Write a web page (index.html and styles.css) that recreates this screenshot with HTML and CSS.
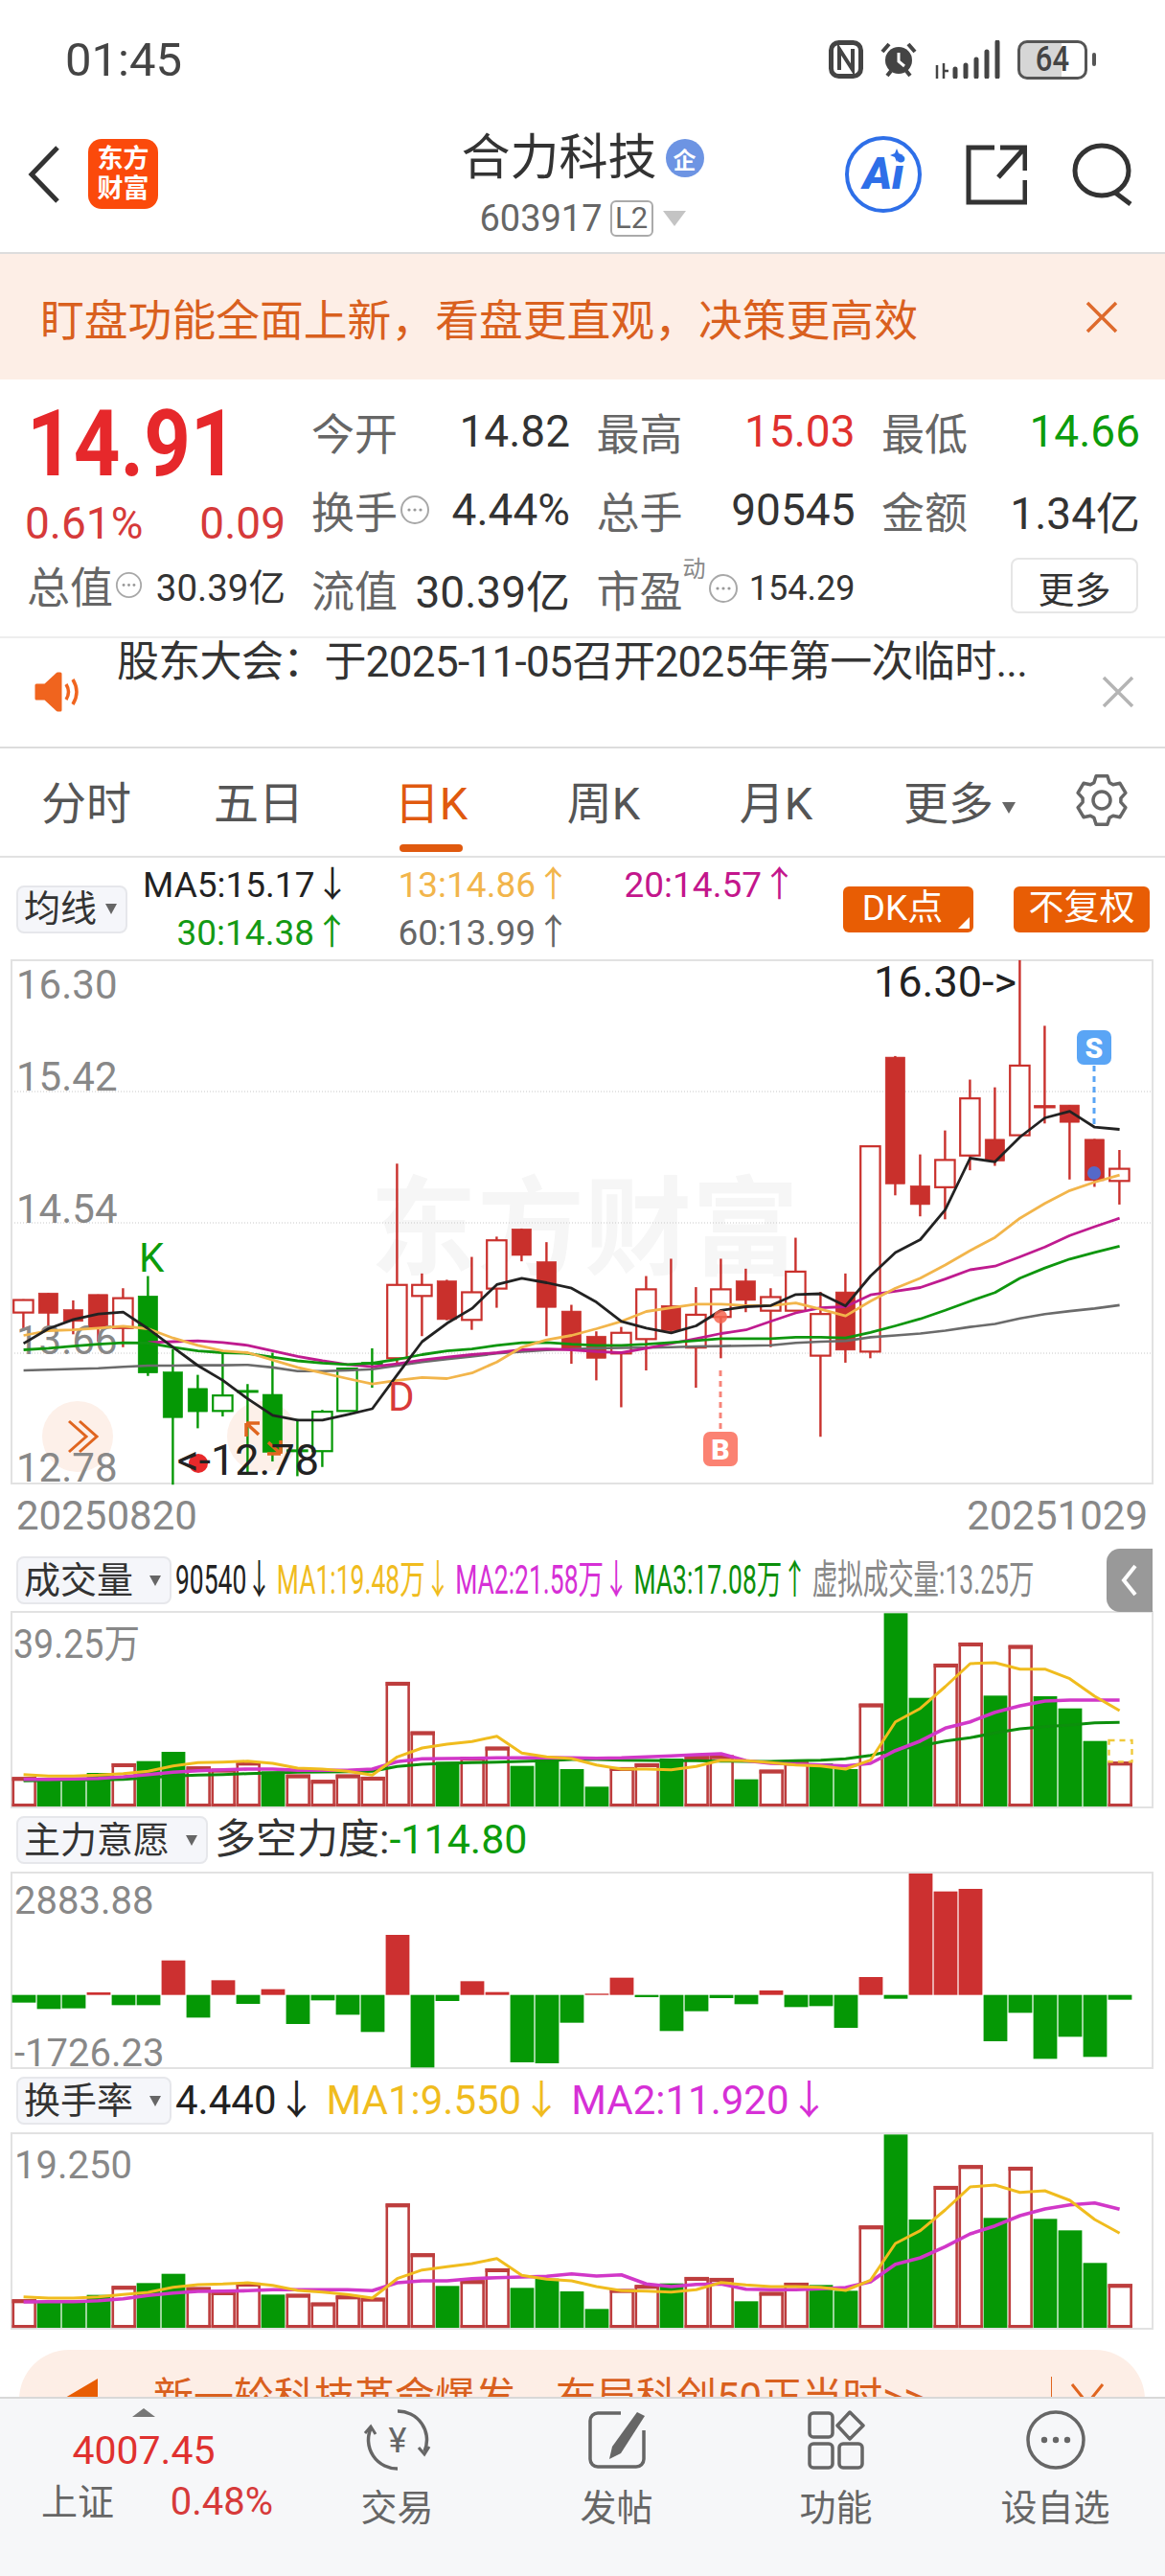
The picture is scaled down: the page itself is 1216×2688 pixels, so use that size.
FILE: index.html
```html
<!DOCTYPE html>
<html lang="zh-CN">
  <head>
    <meta charset="UTF-8" />
    <meta name="viewport" content="width=device-width, initial-scale=1.0" />
    <title>合力科技 603917</title>
    <link rel="stylesheet" href="styles.css">
  </head>
  <body>
    <svg class="defs" width="0" height="0">
      <symbol id="dots" viewBox="0 0 32 32">
        <circle cx="16" cy="16" r="14" fill="none" stroke="#a8a8a8" stroke-width="2" />
        <circle cx="10" cy="16" r="1.6" fill="#999" />
        <circle cx="16" cy="16" r="1.6" fill="#999" />
        <circle cx="22" cy="16" r="1.6" fill="#999" />
      </symbol>
    </svg>

    <div class="phone">
      <div class="status">
        <span class="time">01:45</span>
        <div class="status-icons">
          <svg width="36" height="40" viewBox="0 0 36 40">
            <rect x="2.5" y="2.5" width="31" height="35" rx="8" fill="none" stroke="#444" stroke-width="5" />
            <path d="M11 31V9l14 22V9" fill="none" stroke="#444" stroke-width="4" />
          </svg>
          <svg width="40" height="40" viewBox="0 0 40 40">
            <circle cx="20" cy="21" r="14" fill="#444" />
            <path d="M20 13v9l6 5" fill="none" stroke="#fff" stroke-width="3" />
            <path d="M3 12 10 4M37 12 30 4M8 37l4-5M32 37l-4-5" stroke="#444" stroke-width="4" />
          </svg>
          <svg width="70" height="40" viewBox="0 0 70 40">
            <path d="M3 40V26M10 40V24M15 32h-6" stroke="#444" stroke-width="2.5" fill="none" />
            <path d="M22 38V30M33 38V26M44 38V20M55 38V12M66 38V2" stroke="#444" stroke-width="5" stroke-linecap="round" />
          </svg>
          <div class="battery">
            <span class="battery-num">64</span>
          </div>
          <span class="battery-nub"></span>
        </div>
      </div>

      <div class="header">
        <div class="header-left">
          <svg width="36" height="62" viewBox="0 0 36 62">
            <path d="M32 3 5 31l27 28" fill="none" stroke="#333" stroke-width="5" />
          </svg>
          <div class="logo">东方<br />财富</div>
        </div>
        <div class="header-mid">
          <div class="name-row">
            <span class="stock-name">合力科技</span>
            <span class="qi-badge">企</span>
          </div>
          <div class="code-row">
            <span class="stock-code">603917</span>
            <span class="l2">L2</span>
            <span class="code-arrow"></span>
          </div>
        </div>
        <div class="header-right">
          <div class="ai-btn">
            Ai
            <svg class="ai-star" width="14" height="14" viewBox="0 0 14 14">
              <path d="M7 0 9 5 14 7 9 9 7 14 5 9 0 7 5 5Z" fill="#2e6fe8" />
            </svg>
          </div>
          <svg width="64" height="64" viewBox="0 0 64 64">
            <path d="M30 4H3v57h59V38" fill="none" stroke="#333" stroke-width="5" />
            <path d="M34 35 60 6M36 4h26v24" fill="none" stroke="#333" stroke-width="5" />
          </svg>
          <svg width="66" height="66" viewBox="0 0 66 66">
            <ellipse cx="32" cy="29" rx="28" ry="26" fill="none" stroke="#333" stroke-width="5" />
            <path d="M46 52 62 64" stroke="#333" stroke-width="5" />
          </svg>
        </div>
      </div>

      <div class="promo">
        <span>盯盘功能全面上新，看盘更直观，决策更高效</span>
        <svg width="36" height="36" viewBox="0 0 36 36">
          <path d="M3 3 33 33M33 3 3 33" stroke="#de6a2c" stroke-width="3.5" />
        </svg>
      </div>

      <div class="stats">
        <div class="quote">
          <div class="price">14.91</div>
          <div class="change">
            <span>0.61%</span>
            <span>0.09</span>
          </div>
          <div class="stat">
            <span class="label">总值</span>
            <svg class="dots-icon" width="29" height="29"><use href="#dots" /></svg>
            <span class="value small-a">30.39亿</span>
          </div>
        </div>
        <div class="stat-grid">
          <div class="stat">
            <span class="label">今开</span>
            <span class="value">14.82</span>
          </div>
          <div class="stat">
            <span class="label">最高</span>
            <span class="value up">15.03</span>
          </div>
          <div class="stat">
            <span class="label">最低</span>
            <span class="value down">14.66</span>
          </div>
          <div class="stat">
            <span class="label">换手</span>
            <svg class="dots-icon" width="32" height="32"><use href="#dots" /></svg>
            <span class="value">4.44%</span>
          </div>
          <div class="stat">
            <span class="label">总手</span>
            <span class="value">90545</span>
          </div>
          <div class="stat">
            <span class="label">金额</span>
            <span class="value">1.34亿</span>
          </div>
          <div class="stat">
            <span class="label">流值</span>
            <span class="value">30.39亿</span>
          </div>
          <div class="stat">
            <span class="label">市盈</span>
            <sup class="dyn">动</sup>
            <svg class="dots-icon" width="32" height="32"><use href="#dots" /></svg>
            <span class="value small-b">154.29</span>
          </div>
          <div class="stat">
            <button class="more-btn">更多</button>
          </div>
        </div>
      </div>

      <div class="notice">
        <svg class="speaker" width="50" height="42" viewBox="0 0 50 42">
          <path d="M2 14h9L24 2h3v38h-3L11 28H2z" fill="#f0641e" stroke="#f0641e" stroke-width="3" stroke-linejoin="round" />
          <path d="M33 13q5 8 0 16M40 8q8 13 0 26" fill="none" stroke="#f0641e" stroke-width="3.5" />
        </svg>
        <span class="notice-text">股东大会：于2025-11-05召开2025年第一次临时...</span>
        <svg class="notice-close" width="34" height="34" viewBox="0 0 34 34">
          <path d="M2 2 32 32M32 2 2 32" stroke="#b4b4b4" stroke-width="3.5" />
        </svg>
      </div>

      <div class="tabs">
        <div class="tab">分时</div>
        <div class="tab">五日</div>
        <div class="tab active">日K</div>
        <div class="tab">周K</div>
        <div class="tab">月K</div>
        <div class="tab">更多<span class="tab-arrow"></span></div>
        <svg class="gear" width="56" height="56" viewBox="0 0 56 56">
          <path d="M19.9 9.7 22.1 2.7H33.9L36.1 9.7 39.8 11.8 47 10.3 52.9 20.4 47.9 25.9V30.1L52.9 35.6 47 45.7 39.8 44.2 36.1 46.3 33.9 53.3H22.1L19.9 46.3 16.2 44.2 9 45.7 3.1 35.6 8.1 30.1V25.9L3.1 20.4 9 10.3 16.2 11.8Z" fill="none" stroke="#666" stroke-width="3.5" stroke-linejoin="round" />
          <circle cx="28" cy="28" r="9" fill="none" stroke="#666" stroke-width="3.5" />
        </svg>
      </div>

      <div class="ma-row">
        <div class="select select-ma">均线<span class="select-arrow"></span></div>
        <div class="ma-values">
          <span class="ma-black">MA5:15.17↓</span>
          <span class="ma-yellow">13:14.86↑</span>
          <span class="ma-pink">20:14.57↑</span>
          <span class="ma-green">30:14.38↑</span>
          <span class="ma-grey">60:13.99↑</span>
        </div>
        <div class="ma-buttons">
          <div class="pill pill-dk">DK点</div>
          <div class="pill">不复权</div>
        </div>
      </div>

      <div id="kline" class="chart kline"></div>
      <div class="dates">
        <span>20250820</span>
        <span>20251029</span>
      </div>

      <div class="panel-head vol-head">
        <div class="select select-3">成交量<span class="select-arrow"></span></div>
        <div class="vol-legend">
          <span class="ma-black">90540↓</span>
          <span class="l-yellow">MA1:19.48万↓</span>
          <span class="l-pink">MA2:21.58万↓</span>
          <span class="l-green">MA3:17.08万↑</span>
          <span class="l-grey">虚拟成交量:13.25万</span>
        </div>
        <div class="side-handle">
          <svg width="22" height="36" viewBox="0 0 22 36">
            <path d="M17 3 5 18l12 15" fill="none" stroke="#fff" stroke-width="4" />
          </svg>
        </div>
      </div>
      <div id="volume" class="chart panel-chart"></div>

      <div class="panel-head">
        <div class="select select-4">主力意愿<span class="select-arrow"></span></div>
        <div class="head-text">多空力度:<span class="down">-114.80</span></div>
      </div>
      <div id="force" class="chart panel-chart"></div>

      <div class="panel-head">
        <div class="select select-3">换手率<span class="select-arrow"></span></div>
        <div class="head-text turnover-text">
          <span class="ma-black">4.440↓</span>
          <span class="l-yellow">MA1:9.550↓</span>
          <span class="l-pink">MA2:11.920↓</span>
        </div>
      </div>
      <div id="turnover" class="chart panel-chart"></div>

      <div class="ad">
        <svg width="54" height="60" viewBox="0 0 54 60">
          <path d="M2 22h14L50 2v56L16 40H2z" fill="#e85d04" />
        </svg>
        <span class="ad-text">新一轮科技革命爆发，布局科创50正当时>></span>
        <span class="ad-line"></span>
        <svg width="36" height="24" viewBox="0 0 36 24">
          <path d="M2 2 18 22 34 2" fill="none" stroke="#e0651f" stroke-width="3" />
        </svg>
      </div>

      <div class="tabbar">
        <div class="index-item">
          <span class="index-arrow"></span>
          <div class="index-value">4007.45</div>
          <div class="index-row">
            <span class="index-name">上证</span>
            <span class="index-pct">0.48%</span>
          </div>
        </div>
        <div class="tool">
          <svg width="72" height="64" viewBox="0 0 72 64">
            <path d="M36 2a30 30 0 0 1 28 42M36 62A30 30 0 0 1 8 20" fill="none" stroke="#666" stroke-width="3.5" />
            <path d="M58 40l6 7 5-8M2 25l6-7 5 8" fill="none" stroke="#666" stroke-width="3" />
            <text class="yen" x="36" y="45" text-anchor="middle">¥</text>
          </svg>
          <span>交易</span>
        </div>
        <div class="tool">
          <svg width="64" height="64" viewBox="0 0 64 64">
            <path d="M36 4H12a8 8 0 0 0-8 8v40a8 8 0 0 0 8 8h40a8 8 0 0 0 8-8V22" fill="none" stroke="#666" stroke-width="3.5" />
            <path d="M53 3 61 7 36 46 24 52 27 39Z" fill="#666" />
          </svg>
          <span>发帖</span>
        </div>
        <div class="tool">
          <svg width="62" height="64" viewBox="0 0 62 64">
            <g fill="none" stroke="#666" stroke-width="3.5">
              <rect x="3" y="4" width="24" height="25" rx="4" />
              <path d="M45 3 59 17 45 31 32 17Z" stroke-linejoin="round" />
              <rect x="3" y="36" width="24" height="25" rx="4" />
              <rect x="34" y="36" width="24" height="25" rx="4" />
            </g>
          </svg>
          <span>功能</span>
        </div>
        <div class="tool">
          <svg width="64" height="64" viewBox="0 0 64 64">
            <circle cx="32" cy="32" r="29" fill="none" stroke="#666" stroke-width="3.5" />
            <circle cx="20" cy="32" r="3.2" fill="#666" />
            <circle cx="32" cy="32" r="3.2" fill="#666" />
            <circle cx="44" cy="32" r="3.2" fill="#666" />
          </svg>
          <span>设自选</span>
        </div>
      </div>
    </div>

    <script src="chart.js"></script>
  </body>
</html>
```

FILE: styles.css
```css
* {
  box-sizing: border-box;
}
body {
  margin: 0;
  background-color: white;
  font-family: Roboto, "Noto Sans CJK SC", sans-serif;
  color: #333;
}
.defs {
  position: absolute;
}
.phone {
  width: 1216px;
  height: 2688px;
  overflow: hidden;
  display: flex;
  flex-direction: column;
  position: relative;
}

/* status bar */
.status {
  height: 100px;
  flex: none;
  padding: 24px 72px 0 68px;
  display: flex;
  align-items: center;
  justify-content: space-between;
}
.time {
  font-size: 49px;
  color: #444;
}
.status-icons {
  display: flex;
  align-items: center;
  gap: 17px;
}
.battery {
  width: 73px;
  height: 41px;
  border: 3px solid #555;
  border-radius: 10px;
  background: linear-gradient(90deg, #d6d6d6 64%, white 64%);
  display: flex;
  align-items: center;
  justify-content: center;
  margin-left: 0;
}
.battery-num {
  font-size: 36px;
  font-weight: 500;
  color: #444;
  transform: scaleX(0.86);
}
.battery-nub {
  width: 4px;
  height: 14px;
  background-color: #555;
  border-radius: 2px;
  margin-left: -12px;
}

/* title bar */
.header {
  height: 165px;
  flex: none;
  border-bottom: 2px solid #ddd;
  display: grid;
  grid-template-columns: 1fr auto 1fr;
  align-items: center;
}
.header-left {
  display: flex;
  align-items: center;
  gap: 28px;
  padding-left: 28px;
}
.logo {
  width: 73px;
  height: 73px;
  border-radius: 14px;
  background-color: #fb4a0b;
  color: white;
  font-size: 27px;
  line-height: 31px;
  font-weight: 700;
  text-align: center;
  padding-top: 6px;
}
.header-mid {
  align-self: start;
  display: flex;
  flex-direction: column;
  align-items: center;
  padding-top: 33px;
}
.name-row {
  display: flex;
  align-items: center;
  gap: 9px;
  height: 64px;
}
.stock-name {
  font-size: 51px;
  line-height: 64px;
  color: #333;
}
.qi-badge {
  width: 40px;
  height: 40px;
  border-radius: 50%;
  background-color: #6d94e3;
  color: white;
  font-size: 24px;
  font-weight: 700;
  display: flex;
  align-items: center;
  justify-content: center;
}
.code-row {
  display: flex;
  align-items: center;
  height: 42px;
  margin-top: 10px;
}
.stock-code {
  font-size: 38px;
  line-height: 42px;
  color: #666;
}
.l2 {
  margin-left: 8px;
  width: 45px;
  height: 38px;
  border: 2px solid #aaa;
  border-radius: 6px;
  font-size: 31px;
  line-height: 34px;
  color: #666;
  text-align: center;
}
.code-arrow {
  margin-left: 10px;
  border-left: 12px solid transparent;
  border-right: 12px solid transparent;
  border-top: 16px solid #c4c4c4;
}
.header-right {
  display: flex;
  align-items: center;
  justify-content: flex-end;
  gap: 46px;
  padding-right: 32px;
}
.ai-btn {
  width: 80px;
  height: 80px;
  border: 4px solid #2e6fe8;
  border-radius: 50%;
  color: #2e6fe8;
  font-size: 46px;
  font-weight: 900;
  font-style: italic;
  text-align: center;
  line-height: 70px;
  position: relative;
}
.ai-star {
  position: absolute;
  top: 9px;
  right: 15px;
}

.promo {
  height: 131px;
  flex: none;
  background-color: #fdeee6;
  padding: 0 48px 0 42px;
  display: flex;
  align-items: center;
  justify-content: space-between;
  font-size: 45.8px;
  color: #d9601e;
}

/* quote block */
.stats {
  height: 270px;
  flex: none;
  display: flex;
  border-bottom: 2px solid #eee;
  padding-top: 30px;
}
.quote {
  width: 325px;
  flex: none;
  padding-left: 28px;
}
.price {
  font-size: 96px;
  line-height: 74px;
  height: 74px;
  font-weight: 700;
  color: #e6282b;
  transform: scaleX(0.885);
  transform-origin: left center;
}
.change {
  display: flex;
  justify-content: space-between;
  width: 272px;
  margin-left: -2px;
  margin-top: 21px;
  font-size: 46px;
  line-height: 50px;
  color: #d63a3a;
}
.quote .stat {
  width: 270px;
  margin-top: 15px;
}
.stat-grid {
  display: grid;
  grid-template-columns: repeat(3, 270px);
  grid-auto-rows: 48px;
  column-gap: 27.5px;
  row-gap: 34px;
}
.stat {
  display: flex;
  align-items: center;
  height: 48px;
  white-space: nowrap;
}
.label {
  font-size: 45px;
  color: #666;
}
.value {
  font-size: 46px;
  color: #333;
  margin-left: auto;
}
.value.small-a {
  font-size: 38.5px;
}
.value.small-b {
  font-size: 36px;
}
.up {
  color: #e0312f;
}
.down {
  color: #0c9c0c;
}
.dots-icon {
  flex: none;
  margin-left: 2px;
}
.dyn {
  font-size: 24px;
  color: #888;
  line-height: 1;
  align-self: flex-start;
  margin-top: -8px;
}
.more-btn {
  margin-left: auto;
  margin-right: 2px;
  width: 133px;
  height: 58px;
  margin-top: -6px;
  background-color: white;
  border: 2px solid #e6e6e6;
  border-radius: 8px;
  font-family: inherit;
  font-size: 38px;
  color: #333;
}

.notice {
  height: 115px;
  flex: none;
  border-bottom: 2px solid #ddd;
  position: relative;
  padding-left: 122px;
}
.notice-text {
  font-size: 44px;
  line-height: 50px;
  letter-spacing: -0.7px;
  color: #333;
  white-space: nowrap;
}
.speaker {
  position: absolute;
  left: 36px;
  top: 35px;
}
.notice-close {
  position: absolute;
  left: 1150px;
  top: 39px;
}

/* period tabs */
.tabs {
  height: 114px;
  flex: none;
  display: flex;
  align-items: center;
  padding-bottom: 5px;
  border-bottom: 2px solid #e2e2e2;
}
.tab {
  width: 180px;
  font-size: 47px;
  color: #555;
  text-align: center;
  position: relative;
}
.tab.active {
  color: #e0590e;
}
.tab.active::after {
  content: "";
  position: absolute;
  left: 57px;
  bottom: -20px;
  width: 66px;
  height: 8px;
  border-radius: 4px;
  background-color: #e0590e;
}
.tab-arrow {
  display: inline-block;
  margin-left: 9px;
  margin-right: -23px;
  vertical-align: middle;
  border-left: 7px solid transparent;
  border-right: 7px solid transparent;
  border-top: 12px solid #666;
}
.gear {
  margin-left: 42px;
}

/* moving average legend */
.ma-row {
  height: 107px;
  flex: none;
  display: flex;
  align-items: center;
  padding-left: 17px;
  padding-right: 16px;
}
.select {
  height: 50px;
  display: flex;
  align-items: center;
  flex: none;
  padding: 0 0 8px 6px;
  background-color: #f5f6fa;
  border: 2px solid #e6e7eb;
  border-radius: 8px;
  font-size: 38px;
  color: #333;
}
.select-ma {
  width: 116px;
}
.select-3 {
  width: 162px;
}
.select-4 {
  width: 200px;
}
.select-arrow {
  margin-left: auto;
  margin-right: 9px;
  margin-bottom: -8px;
  border-left: 6px solid transparent;
  border-right: 6px solid transparent;
  border-top: 11px solid #666;
}
.ma-values {
  display: grid;
  grid-template-columns: 216px 208px 213px;
  column-gap: 23px;
  margin-left: 16px;
  font-size: 37px;
  line-height: 50px;
  text-align: right;
  white-space: nowrap;
}
.ma-black {
  color: #222;
}
.ma-yellow {
  color: #f2b54b;
}
.ma-pink {
  color: #c3168c;
}
.ma-green {
  color: #149a14;
}
.ma-grey {
  color: #666;
}
.ma-buttons {
  display: flex;
  gap: 42px;
  margin-left: auto;
}
.pill {
  width: 142px;
  height: 48px;
  background-color: #e85d04;
  border-radius: 6px;
  color: white;
  font-size: 37px;
  line-height: 46px;
  text-align: center;
  position: relative;
}
.pill-dk {
  width: 136px;
  padding-right: 12px;
}
.pill-dk::after {
  content: "";
  position: absolute;
  right: 4px;
  bottom: 4px;
  border-left: 12px solid transparent;
  border-bottom: 12px solid white;
}

/* chart areas */
.chart {
  flex: none;
  margin-left: 12px;
  width: 1191px;
}
.chart svg {
  display: block;
  overflow: visible;
}
.kline {
  height: 546px;
}
.panel-chart {
  height: 204px;
}
.dates {
  height: 68px;
  flex: none;
  padding: 0 18px 0 17px;
  display: flex;
  justify-content: space-between;
  font-size: 42px;
  line-height: 68px;
  color: #888;
}
.panel-head {
  height: 68px;
  flex: none;
  display: flex;
  align-items: center;
  padding-left: 17px;
}
.vol-head {
  height: 66px;
}
.vol-legend {
  display: flex;
  gap: 8px;
  margin-left: 4px;
  padding-bottom: 10px;
  font-size: 42px;
  white-space: nowrap;
  transform: scaleX(0.63);
  transform-origin: left center;
  width: 900px;
  flex: none;
}
.l-yellow {
  color: #f0bc1e;
}
.l-pink {
  color: #d630d6;
}
.l-green {
  color: #0b8f0b;
}
.l-grey {
  color: #888;
}
.side-handle {
  position: absolute;
  left: 1155px;
  width: 48px;
  height: 66px;
  background-color: #999;
  border-radius: 14px 0 0 14px;
  display: flex;
  align-items: center;
  justify-content: center;
}
.head-text {
  margin-left: 7px;
  padding-bottom: 10px;
  font-size: 43px;
  white-space: nowrap;
}
.turnover-text {
  font-size: 42px;
  display: flex;
  gap: 10px;
  margin-left: 4px;
}

/* text drawn inside the svg charts */
.axis {
  font-size: 42px;
  fill: #888;
}
.axis-small {
  font-size: 40px;
  fill: #888;
}
.mark-k {
  font-size: 42px;
  fill: #0c9c0c;
}
.mark-d {
  font-size: 42px;
  fill: #d83a3a;
}
.extreme {
  font-size: 45px;
  fill: #222;
}
.tag {
  font-size: 30px;
  font-weight: 900;
  fill: white;
}
.watermark {
  font-size: 112px;
  font-weight: 700;
  fill: #f6f6f6;
}

.ad {
  flex: none;
  height: 110px;
  margin: 22px 21px 0 20px;
  padding: 28px 40px 0 32px;
  border-radius: 52px 52px 0 0;
  background-color: #fdeee6;
  display: flex;
  align-items: flex-start;
}
.ad-text {
  margin-left: 54px;
  font-size: 42px;
  line-height: 44px;
  color: #d9601e;
  white-space: nowrap;
}
.ad-line {
  margin-left: 132px;
  width: 1px;
  height: 40px;
  background-color: #e0651f;
}
.ad svg:last-child {
  margin-left: 19px;
  margin-top: 6px;
}

/* bottom bar */
.tabbar {
  position: absolute;
  left: 0;
  right: 0;
  top: 2501px;
  height: 187px;
  background-color: #f6f7f9;
  border-top: 2px solid #d8d8d8;
  display: flex;
}
.index-item {
  width: 300px;
  flex: none;
  display: flex;
  flex-direction: column;
  align-items: center;
  padding-top: 10px;
}
.index-arrow {
  border-left: 12px solid transparent;
  border-right: 12px solid transparent;
  border-bottom: 9px solid #777;
}
.index-value {
  margin-top: 11px;
  font-size: 41px;
  line-height: 48px;
  color: #e0312f;
}
.index-row {
  margin-top: 5px;
  width: 242px;
  align-self: flex-start;
  margin-left: 43px;
  display: flex;
  justify-content: space-between;
  align-items: center;
  line-height: 50px;
}
.index-name {
  font-size: 38px;
  color: #666;
}
.index-pct {
  font-size: 40px;
  color: #d63a3a;
}
.tool {
  width: 229px;
  flex: none;
  display: flex;
  flex-direction: column;
  align-items: center;
  padding-top: 11px;
  font-size: 38px;
  line-height: 50px;
  color: #666;
}
.tool svg {
  height: 64px;
  margin-bottom: 14px;
}
.yen {
  font-size: 36px;
  fill: #666;
}
```

FILE: chart.js
```js
const NS = "http://www.w3.org/2000/svg";
const RED = "#c9302c";
const GREEN = "#059805";

function add(parent, name, attrs, text) {
  const node = document.createElementNS(NS, name);
  for (const key in attrs) {
    node.setAttribute(key, attrs[key]);
  }
  if (text) {
    node.textContent = text;
  }
  parent.appendChild(node);
  return node;
}

function makeSvg(id, width, height) {
  const holder = document.getElementById(id);
  return add(holder, "svg", {
    width: width,
    height: height,
    viewBox: `0 0 ${width} ${height}`,
  });
}

function frame(svg, width, height) {
  add(svg, "rect", {
    x: 0,
    y: 0,
    width: width,
    height: height,
    fill: "none",
    stroke: "#e2e2e2",
    "stroke-width": 2,
  });
}

// line through one value per trading day, starting at day `from`
function line(svg, values, toY, color, width, from) {
  const start = from || 0;
  const points = values.map((v, i) => {
    const x = 12.6 + 26 * (i + start);
    return x.toFixed(1) + "," + toY(v).toFixed(1);
  });
  add(svg, "polyline", {
    points: points.join(" "),
    fill: "none",
    stroke: color,
    "stroke-width": width,
    "stroke-linejoin": "round",
  });
}

/* ---------- daily candles ---------- */
// wick top, body top, body bottom, wick bottom, style (R solid, r hollow, G solid, g hollow)
const CANDLES = [
  [925, 927, 961, 1010, "r"], [908, 908, 963, 1005, "R"], [928, 953, 985, 1020, "R"],
  [912, 912, 1003, 1040, "R"], [895, 922, 1003, 1055, "r"], [862, 916, 1125, 1133, "G"],
  [1060, 1122, 1246, 1428, "G"], [1130, 1167, 1230, 1275, "G"], [1065, 1186, 1228, 1243, "g"],
  [1155, 1174, 1176, 1400, "g"], [1070, 1183, 1340, 1365, "G"], [1250, 1335, 1337, 1405, "g"],
  [1225, 1230, 1337, 1380, "g"], [1113, 1113, 1228, 1228, "g"], [1058, 1098, 1100, 1165, "g"],
  [557, 886, 1085, 1100, "r"], [855, 886, 916, 1025, "r"], [872, 875, 980, 982, "R"],
  [810, 906, 981, 1008, "r"], [755, 765, 896, 948, "r"], [733, 734, 806, 822, "R"],
  [770, 823, 947, 1025, "R"], [940, 957, 1060, 1100, "R"], [1012, 1025, 1085, 1145, "R"],
  [1000, 1016, 1072, 1218, "r"], [862, 898, 1033, 1118, "r"], [815, 942, 1010, 1015, "R"],
  [892, 967, 1056, 1165, "r"], [815, 898, 973, 1085, "r"], [842, 875, 928, 960, "R"],
  [895, 919, 956, 1055, "r"], [758, 850, 956, 956, "r"], [905, 965, 1078, 1298, "r"],
  [855, 905, 1063, 1097, "R"], [510, 510, 1067, 1085, "r"], [265, 268, 612, 643, "R"],
  [532, 617, 668, 700, "R"], [467, 547, 621, 708, "r"], [329, 380, 535, 575, "r"],
  [350, 491, 550, 563, "R"], [5, 291, 480, 480, "r"], [183, 401, 404, 448, "r"],
  [398, 398, 445, 600, "R"], [490, 491, 603, 620, "R"], [520, 571, 604, 668, "r"],
];

const MA5 = [1045, 1005, 980, 965, 960, 1005, 1055, 1105, 1145, 1195, 1240, 1253, 1253, 1238, 1222, 1130, 1040, 990, 950, 885, 868, 880, 895, 933, 985, 1003, 1016, 997, 955, 945, 942, 912, 910, 943, 862, 798, 763, 682, 542, 552, 485, 433, 415, 458, 464];
const MA13 = [1023, 1010, 1008, 1003, 998, 1005, 1030, 1050, 1065, 1070, 1090, 1110, 1125, 1140, 1155, 1145, 1137, 1140, 1125, 1095, 1055, 1035, 1023, 1005, 985, 958, 948, 938, 938, 942, 942, 935, 952, 970, 930, 895, 868, 832, 793, 757, 705, 665, 630, 607, 588];
const MA20 = [1042, 1040, 1038, 1042, 1050, 1065, 1080, 1092, 1102, 1108, 1100, 1090, 1082, 1075, 1070, 1062, 1060, 1062, 1067, 1070, 1058, 1045, 1032, 1018, 1008, 985, 962, 948, 945, 913, 903, 893, 870, 845, 835, 810, 783, 752, 728, 705];
const MA30 = [1062, 1058, 1052, 1047, 1043, 1044, 1055, 1065, 1070, 1072, 1082, 1092, 1098, 1102, 1098, 1088, 1075, 1065, 1060, 1050, 1043, 1042, 1047, 1050, 1050, 1047, 1042, 1037, 1032, 1032, 1032, 1028, 1028, 1030, 1015, 997, 978, 955, 930, 907, 868, 840, 816, 798, 781];
const MA60 = [1118, 1116, 1114, 1112, 1108, 1105, 1105, 1104, 1104, 1103, 1110, 1120, 1120, 1118, 1115, 1105, 1095, 1087, 1080, 1072, 1067, 1063, 1060, 1058, 1057, 1056, 1055, 1053, 1052, 1051, 1050, 1043, 1040, 1038, 1028, 1023, 1018, 1010, 1000, 992, 977, 965, 957, 950, 941];

function drawKline() {
  const W = 1191;
  const H = 546;
  const toY = (v) => v / 2.6 - 2;
  const svg = makeSvg("kline", W, H);

  add(svg, "text", { class: "watermark", x: 374, y: 320 }, "东方财富");
  [137, 274, 410].forEach((y) => {
    add(svg, "line", {
      x1: 0,
      x2: W,
      y1: y,
      y2: y,
      stroke: "#c8c8c8",
      "stroke-width": 1,
      "stroke-dasharray": "1 2",
    });
  });
  frame(svg, W, H);

  // shortcut buttons that float above the plot
  add(svg, "circle", { cx: 69, cy: 497, r: 37, fill: "#fdf0e9" });
  add(svg, "circle", { cx: 262, cy: 497, r: 37, fill: "#fdf0e9" });

  CANDLES.forEach((c, i) => {
    const x = 12.4 + 26 * i;
    const solid = c[4] === "R" || c[4] === "G";
    const color = c[4].toLowerCase() === "r" ? RED : GREEN;
    add(svg, "line", {
      x1: x,
      x2: x,
      y1: toY(c[0]),
      y2: toY(c[3]),
      stroke: color,
      "stroke-width": 2.4,
    });
    add(svg, "rect", {
      x: x - 10.2,
      y: toY(c[1]),
      width: 20.4,
      height: toY(c[2]) - toY(c[1]),
      fill: solid ? color : "white",
      stroke: color,
      "stroke-width": solid ? 0.6 : 2.2,
    });
  });

  [
    [5, 40, "16.30"],
    [5, 136, "15.42"],
    [5, 274, "14.54"],
    [5, 411, "13.66"],
    [5, 544, "12.78"],
  ].forEach((a) => add(svg, "text", { class: "axis", x: a[0], y: a[1] }, a[2]));

  line(svg, MA60, toY, "#6b6b6b", 2.6);
  line(svg, MA20, toY, "#bf1b8f", 2.8, 5);
  line(svg, MA30, toY, "#0e960e", 2.8);
  line(svg, MA13, toY, "#f2b54b", 2.8);
  line(svg, MA5, toY, "#222", 2.8);

  add(svg, "text", { class: "mark-k", x: 133, y: 325 }, "K");
  add(svg, "text", { class: "mark-d", x: 393, y: 470 }, "D");

  // double chevron and expand arrows on the floating buttons
  add(svg, "path", {
    d: "M60 481 78 497 60 513M71 481 89 497 71 513",
    fill: "none",
    stroke: "#e0651f",
    "stroke-width": 3,
  });
  add(svg, "path", {
    d: "M245 483V497M245 483H259M245 483 258 495M281 515V501M281 515H267M281 515 268 503",
    fill: "none",
    stroke: "#e0651f",
    "stroke-width": 3.5,
  });

  // lowest and highest price markers
  add(svg, "circle", { cx: 195, cy: 525, r: 10, fill: "#e8292b" });
  add(svg, "text", { class: "extreme", x: 321, y: 537, "text-anchor": "end" }, "<-12.78");
  add(svg, "text", { class: "extreme", x: 1049, y: 38, "text-anchor": "end" }, "16.30->");

  // buy marker
  add(svg, "line", {
    x1: 740,
    x2: 740,
    y1: 428,
    y2: 492,
    stroke: "#f7857a",
    "stroke-width": 3,
    "stroke-dasharray": "6 5",
  });
  add(svg, "circle", { cx: 740, cy: 372, r: 7, fill: "#f6654f", opacity: 0.85 });
  add(svg, "rect", { x: 722, y: 492, width: 36, height: 36, rx: 7, fill: "#fb8272" });
  add(svg, "text", { class: "tag", x: 740, y: 521, "text-anchor": "middle" }, "B");

  // sell marker
  add(svg, "line", {
    x1: 1130,
    x2: 1130,
    y1: 110,
    y2: 174,
    stroke: "#5aa5f5",
    "stroke-width": 3,
    "stroke-dasharray": "6 5",
  });
  add(svg, "circle", { cx: 1130, cy: 222, r: 7, fill: "#5569c9" });
  add(svg, "rect", { x: 1112, y: 73, width: 36, height: 36, rx: 7, fill: "#5aa5f5" });
  add(svg, "text", { class: "tag", x: 1130, y: 102, "text-anchor": "middle" }, "S");
}

/* ---------- lower panels ---------- */
const DAY_KIND = "HGGGHGGHHHGHHHHHHGHHGGGGHHGHHGHHGGHGGHHGHGGGH";

function drawBars(svg, tops, toY, bottom) {
  tops.forEach((top, i) => {
    const x = 0.6 + 26 * i;
    const y = toY(top);
    if (DAY_KIND[i] === "G") {
      add(svg, "rect", { x: x, y: y, width: 24.8, height: bottom - y, fill: GREEN });
    } else {
      add(svg, "rect", {
        x: x + 1.2,
        y: y + 1.2,
        width: 22.8,
        height: bottom - y - 2.4,
        fill: "white",
        stroke: "#bd3d3d",
        "stroke-width": 2.6,
      });
      // heavier cap along the top and bottom of the hollow bars
      add(svg, "rect", { x: x, y: y, width: 25.4, height: 4, fill: "#bd3d3d" });
      add(svg, "rect", { x: x, y: bottom - 3, width: 25.4, height: 3, fill: "#bd3d3d" });
    }
  });
}

const VOL_TOPS = [763, 770, 770, 750, 720, 713, 684, 730, 737, 715, 745, 755, 772, 755, 762, 465, 620, 715, 700, 668, 728, 705, 738, 793, 732, 720, 705, 697, 695, 770, 740, 715, 720, 738, 533, 250, 515, 408, 342, 508, 350, 510, 548, 650, 715];
const VOL_MA1 = [755, 760, 760, 757, 752, 745, 728, 718, 716, 713, 720, 735, 738, 745, 757, 700, 672, 660, 652, 635, 688, 700, 705, 725, 738, 738, 740, 730, 710, 712, 718, 725, 728, 738, 710, 590, 548, 480, 408, 405, 425, 425, 455, 510, 555];
const VOL_MA2 = [770, 770, 769, 767, 762, 755, 748, 743, 740, 738, 738, 742, 742, 742, 738, 715, 706, 705, 704, 703, 703, 702, 703, 704, 703, 700, 697, 693, 690, 712, 720, 722, 725, 728, 720, 680, 650, 610, 590, 560, 540, 525, 522, 522, 522];
const VOL_MA3 = [775, 773, 772, 772, 770, 765, 760, 757, 755, 752, 750, 748, 747, 746, 745, 730, 723, 720, 718, 716, 714, 712, 708, 708, 710, 711, 712, 712, 713, 714, 714, 712, 710, 706, 695, 678, 665, 650, 640, 625, 612, 605, 600, 593, 592];

function drawVolume() {
  const W = 1191;
  const H = 204;
  const toY = (v) => (v - 246) / 3;
  const svg = makeSvg("volume", W, H);
  frame(svg, W, H);
  drawBars(svg, VOL_TOPS, toY, 203);
  // today's projected volume
  add(svg, "rect", {
    x: 1145.5,
    y: toY(648),
    width: 24,
    height: toY(715) - toY(648),
    fill: "none",
    stroke: "#f0c93c",
    "stroke-width": 2.4,
    "stroke-dasharray": "6 5",
  });
  line(svg, VOL_MA3, toY, "#0c8f0c", 3);
  line(svg, VOL_MA2, toY, "#d138c8", 3.6);
  line(svg, VOL_MA1, toY, "#f0bc1e", 3);
  add(svg, "text", {
    class: "axis",
    x: 2,
    y: 48,
    textLength: 132,
    lengthAdjust: "spacingAndGlyphs",
  }, "39.25万");
}

const FORCE = [570, 590, 588, 538, 578, 578, 438, 617, 500, 574, 528, 637, 563, 608, 662, 358, 773, 565, 503, 537, 757, 760, 633, 542, 492, 553, 659, 597, 556, 575, 532, 584, 581, 649, 490, 558, 166, 222, 214, 691, 602, 746, 677, 740, 561];

function drawForce() {
  const W = 1191;
  const H = 204;
  const toY = (v) => (v - 163) / 3;
  const zero = toY(546);
  const svg = makeSvg("force", W, H);
  frame(svg, W, H);
  FORCE.forEach((v, i) => {
    const y = toY(v);
    add(svg, "rect", {
      x: 0.6 + 26 * i,
      y: Math.min(y, zero),
      width: 24.8,
      height: Math.abs(y - zero),
      fill: v < 546 ? "#cc3030" : GREEN,
    });
  });
  add(svg, "text", { class: "axis-small", x: 3, y: 43 }, "2883.88");
  add(svg, "text", { class: "axis-small", x: 3, y: 202 }, "-1726.23");
}

const TURN_TOPS = [720, 730, 730, 706, 678, 669, 640, 682, 695, 668, 705, 703, 730, 708, 715, 420, 576, 678, 660, 623, 684, 655, 695, 750, 688, 675, 670, 650, 653, 726, 697, 668, 675, 693, 489, 204, 470, 365, 300, 465, 305, 468, 504, 606, 672];
const TURN_MA1 = [712, 716, 716, 712, 705, 698, 682, 674, 672, 668, 676, 692, 697, 705, 716, 655, 628, 618, 608, 592, 645, 657, 662, 680, 693, 694, 697, 690, 667, 675, 680, 680, 682, 692, 660, 545, 505, 440, 368, 362, 385, 380, 410, 470, 513];
const TURN_MA2 = [728, 727, 727, 724, 718, 708, 700, 695, 694, 693, 690, 690, 690, 690, 693, 668, 662, 662, 655, 652, 650, 648, 640, 647, 643, 672, 680, 673, 672, 688, 690, 690, 687, 683, 665, 610, 590, 555, 515, 490, 458, 437, 424, 418, 438];

function drawTurnover() {
  const W = 1191;
  const H = 204;
  const toY = (v) => (v - 200) / 3;
  const svg = makeSvg("turnover", W, H);
  frame(svg, W, H);
  drawBars(svg, TURN_TOPS, toY, 203);
  line(svg, TURN_MA2, toY, "#d138c8", 3.6);
  line(svg, TURN_MA1, toY, "#f0bc1e", 3);
  add(svg, "text", { class: "axis-small", x: 3, y: 47 }, "19.250");
}

drawKline();
drawVolume();
drawForce();
drawTurnover();
```
